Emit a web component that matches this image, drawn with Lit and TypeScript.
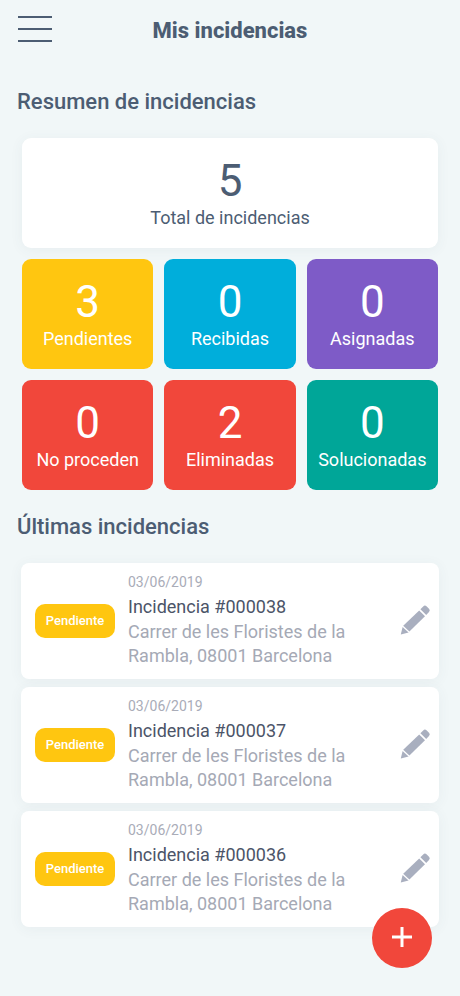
import { LitElement, html, css, svg } from "lit";
import { customElement, property } from "lit/decorators.js";

interface Incident {
  date: string;
  code: string;
  address: string;
  status: string;
}

const SUMMARY = [
  { count: 3, label: "Pendientes", tone: "yellow" },
  { count: 0, label: "Recibidas", tone: "blue" },
  { count: 0, label: "Asignadas", tone: "purple" },
  { count: 0, label: "No proceden", tone: "red" },
  { count: 2, label: "Eliminadas", tone: "red" },
  { count: 0, label: "Solucionadas", tone: "green" },
];

const ADDRESS = "Carrer de les Floristes de la Rambla, 08001 Barcelona";

const INCIDENTS: Incident[] = ["#000038", "#000037", "#000036"].map((code) => ({
  date: "03/06/2019",
  code,
  address: ADDRESS,
  status: "Pendiente",
}));

const pencil = svg`
  <path d="M0.8 30.4 L2.6 23 L8.6 28.6 Z" />
  <path d="M3.2 21.8 L19.2 6.6 L25 12.2 L9.4 27.6 Z" />
  <path d="M20.4 5.3 L23.2 2.4 Q24.9 0.8 26.5 2.3 L29 4.8 Q30.6 6.3 29 8 L26.2 10.9 Z" />
`;

@customElement("summary-tile")
export class SummaryTile extends LitElement {
  @property({ type: Number }) count = 0;
  @property() label = "";
  @property({ reflect: true }) tone = "white";

  static styles = css`
    :host {
      display: flex;
      flex-direction: column;
      align-items: center;
      box-sizing: border-box;
      height: 110px;
      padding-top: 17px;
      border-radius: 9px;
      color: #fff;
      white-space: nowrap;
    }
    :host([tone="white"]) {
      background: #fff;
      color: #4c5d73;
      box-shadow: 0 2px 14px rgba(70, 80, 100, 0.06);
    }
    :host([tone="yellow"]) { background: #ffc610; }
    :host([tone="blue"]) { background: #00aedb; }
    :host([tone="purple"]) { background: #7e5bc7; }
    :host([tone="red"]) { background: #f1473b; }
    :host([tone="green"]) { background: #00a698; }
    .count {
      font-size: 44px;
      line-height: 52px;
    }
    .label {
      font-size: 18px;
      line-height: 22px;
    }
  `;

  render() {
    return html`
      <span class="count">${this.count}</span>
      <span class="label">${this.label}</span>
    `;
  }
}

@customElement("incident-card")
export class IncidentCard extends LitElement {
  @property({ attribute: false }) incident!: Incident;

  static styles = css`
    :host {
      display: flex;
      align-items: center;
      box-sizing: border-box;
      min-height: 116px;
      padding: 6px 8px 6px 14px;
      border-radius: 8px;
      background: #fff;
      box-shadow: 0 2px 14px rgba(70, 80, 100, 0.06);
    }
    .status {
      flex: none;
      box-sizing: border-box;
      width: 80px;
      margin-right: 13px;
      border-radius: 10px;
      background: #ffc610;
      color: #fff;
      font-size: 13px;
      font-weight: 500;
      line-height: 34px;
      text-align: center;
    }
    .info {
      flex: 1;
      min-width: 0;
      padding-bottom: 4px;
    }
    .date {
      color: #a9acb8;
      font-size: 14px;
      line-height: 24px;
    }
    .code {
      margin: 0;
      color: #4c5468;
      font-size: 18px;
      font-weight: 400;
      line-height: 26px;
    }
    .address {
      margin: 0;
      max-width: 240px;
      color: #a5a9b5;
      font-size: 18px;
      line-height: 24px;
    }
    .edit {
      flex: none;
      padding: 0;
      border: 0;
      background: none;
      cursor: pointer;
    }
    .edit svg {
      display: block;
      fill: #a9afbf;
    }
  `;

  render() {
    const { date, code, address, status } = this.incident;
    return html`
      <span class="status">${status}</span>
      <div class="info">
        <time class="date">${date}</time>
        <h3 class="code">Incidencia ${code}</h3>
        <p class="address">${address}</p>
      </div>
      <button class="edit" aria-label="Editar">
        <svg width="31" height="34" viewBox="0 0 31 34">${pencil}</svg>
      </button>
    `;
  }
}

@customElement("app-root")
export class AppRoot extends LitElement {
  static styles = css`
    :host {
      display: block;
      box-sizing: border-box;
      min-height: 100vh;
      padding-bottom: 68px;
      background: #f1f7f8;
      color: #4c5d73;
      font-family: Roboto, "Liberation Sans", sans-serif;
    }
    .bar {
      display: grid;
      grid-template-columns: 36px 1fr 36px;
      align-items: center;
      height: 60px;
      padding: 0 17px;
    }
    .menu {
      padding: 0;
      border: 0;
      background: none;
      cursor: pointer;
    }
    .menu svg {
      display: block;
      stroke: #4c5d73;
      stroke-width: 2;
    }
    .title {
      margin: 0;
      font-size: 22px;
      font-weight: 800;
      line-height: 30px;
      padding-top: 2px;
      text-align: center;
    }
    .heading {
      margin: 0;
      padding: 0 17px;
      font-size: 22px;
      font-weight: 500;
      line-height: 28px;
    }
    .summary {
      display: grid;
      grid-template-columns: repeat(3, 1fr);
      gap: 11px;
      padding: 22px 22px 23px;
    }
    .total {
      grid-column: 1 / -1;
    }
    main {
      padding-top: 28px;
    }
    .list {
      display: flex;
      flex-direction: column;
      gap: 8px;
      padding: 22px 21px 0;
    }
    .add {
      position: fixed;
      right: 28px;
      bottom: 28px;
      width: 60px;
      height: 60px;
      padding: 0;
      border: 0;
      border-radius: 50%;
      background: #f1473b;
      cursor: pointer;
    }
    .add svg {
      display: block;
      margin: 0 auto;
      stroke: #fff;
      stroke-width: 3;
    }
  `;

  render() {
    return html`
      <header class="bar">
        <button class="menu" aria-label="Menú">
          <svg width="36" height="30" viewBox="0 0 36 30">
            <path d="M1 2H35M1 14H35M1 26H35" />
          </svg>
        </button>
        <h1 class="title">Mis incidencias</h1>
      </header>
      <main>
        <h2 class="heading">Resumen de incidencias</h2>
        <section class="summary">
          <summary-tile class="total" count="5" label="Total de incidencias"></summary-tile>
          ${SUMMARY.map(
            (s) => html`<summary-tile .count=${s.count} label=${s.label} tone=${s.tone}></summary-tile>`
          )}
        </section>
        <h2 class="heading">Últimas incidencias</h2>
        <section class="list">
          ${INCIDENTS.map((i) => html`<incident-card .incident=${i}></incident-card>`)}
        </section>
      </main>
      <button class="add" aria-label="Añadir incidencia">
        <svg width="20" height="22" viewBox="0 0 20 22"><path d="M10 0V20M0 10H20" /></svg>
      </button>
    `;
  }
}
